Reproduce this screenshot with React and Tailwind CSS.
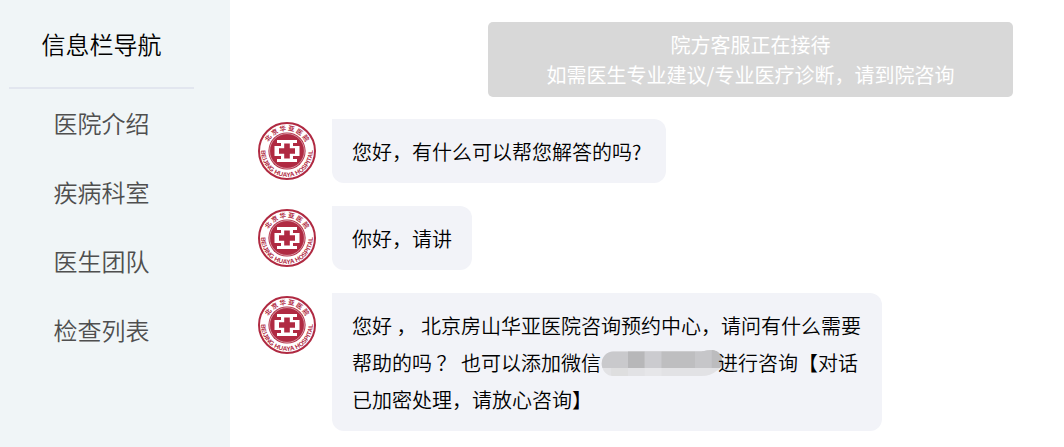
const FONT = "font-['Noto_Sans_CJK_SC',sans-serif]";

const navItems = ['医院介绍', '疾病科室', '医生团队', '检查列表'];

function HospitalLogo({ id }) {
  return (
    <svg viewBox="0 0 58 58" className="size-[58px] shrink-0" role="img" aria-label="北京华亚医院">
      <defs>
        <path id={`${id}-top`} d="M 8.6 29 A 20.4 20.4 0 0 1 49.4 29" />
        <path id={`${id}-bottom`} d="M 6.8 15.6 A 25.9 25.9 0 1 0 51.2 15.6" />
      </defs>
      <circle cx="29" cy="29" r="28" fill="#fff" stroke="#b02a42" strokeWidth="2" />
      <circle cx="29" cy="29" r="18.6" fill="#b02a42" />
      <circle cx="29" cy="29" r="17.4" fill="none" stroke="#fff" strokeWidth="0.5" />
      <path
        d="M19 18H39V21H35V24H41.5V34H35V37H39V40H19V37H23V34H16.5V24H23V21H19Z"
        fill="#fff"
      />
      <path d="M26.2 21.5H31.8V26.2H37V31.8H31.8V36.5H26.2V31.8H21V26.2H26.2Z" fill="#b02a42" />
      <text fill="#b02a42" fontSize="6.4" fontWeight="700" textAnchor="middle" className="font-['Noto_Sans_CJK_SC',sans-serif]">
        <textPath href={`#${id}-top`} startOffset="50%">北 京 华 亚 医 院</textPath>
      </text>
      <text fill="#b02a42" fontSize="6.4" fontWeight="700" textAnchor="middle" className="font-['Liberation_Sans',sans-serif]">
        <textPath href={`#${id}-bottom`} startOffset="50%">BEIJING HUAYA HOSPITAL</textPath>
      </text>
    </svg>
  );
}

function Message({ id, children }) {
  return (
    <li className="flex items-start gap-4">
      <div className="pt-[3px]">
        <HospitalLogo id={id} />
      </div>
      <p className="max-w-[550px] rounded-xl rounded-tl-none bg-[#f2f3f8] px-5 pt-[14px] pb-[13px] text-xl leading-[37px] font-[350] text-black">
        {children}
      </p>
    </li>
  );
}

function MaskedId() {
  return (
    <svg viewBox="0 0 130 26" preserveAspectRatio="none" className="-mr-1 inline-block h-[26px] w-[121px] align-[-5px]" aria-hidden="true">
      <defs>
        <clipPath id="mask-shape">
          <path d="M13 1.5H108Q114 0 120 0Q130 1 130 12Q129 19 124 21Q118 26 108 26H13A12 12 0 0 1 13 1.5Z" />
        </clipPath>
      </defs>
      <g clipPath="url(#mask-shape)">
        <rect width="130" height="26" fill="#e2e2e5" />
        <rect width="130" height="18" fill="#c9c9cc" />
        <rect x="29" width="18" height="18" fill="#b7b7b9" />
        <rect x="47" width="18" height="18" fill="#cbcbcf" />
        <rect x="65" width="36" height="18" fill="#bebec0" />
        <rect x="101" width="18" height="18" fill="#c6c6c9" />
        <rect x="119" width="11" height="18" fill="#bcbcbe" />
        <rect x="11" y="18" width="18" height="8" fill="#dededf" />
        <rect x="47" y="18" width="18" height="8" fill="#e6e6e9" />
      </g>
    </svg>
  );
}

export default function App() {
  return (
    <div className={`flex min-h-screen bg-white ${FONT}`}>
      <aside className="w-[230px] shrink-0 bg-[#f0f5f7] pr-9 pl-[9px]">
        <h2 className="border-b-2 border-[#e2e6ef] pt-[26px] pb-[25px] text-center text-2xl leading-9 font-[350] text-black">信息栏导航</h2>
        <nav aria-label="信息栏导航">
          <ul className="flex flex-col gap-[33px] pt-4 text-center text-2xl leading-9 font-[350] text-[#4f4f4f]">
            {navItems.map((item) => (
              <li key={item}>
                <a href="#">{item}</a>
              </li>
            ))}
          </ul>
        </nav>
      </aside>
      <main className="min-w-0 flex-1 pt-[22px] pr-[51px] pb-4 pl-7">
        <div className="ml-auto w-[525px] max-w-full rounded-[5px] bg-[#d8d8d8] pt-2 pb-[7px] text-center text-xl leading-[30px] text-white">
          <p>院方客服正在接待</p>
          <p>如需医生专业建议/专业医疗诊断，请到院咨询</p>
        </div>
        <ul className="flex flex-col gap-[23px] pt-[22px]">
          <Message id="logo-1">您好，有什么可以帮您解答的吗?&nbsp;</Message>
          <Message id="logo-2">你好，请讲</Message>
          <Message id="logo-3">
            您好 ， 北京房山华亚医院咨询预约中心，请问有什么需要帮助的吗 ？ 也可以添加微信
            <MaskedId />
            进行咨询【对话已加密处理，请放心咨询】
          </Message>
        </ul>
      </main>
    </div>
  );
}
